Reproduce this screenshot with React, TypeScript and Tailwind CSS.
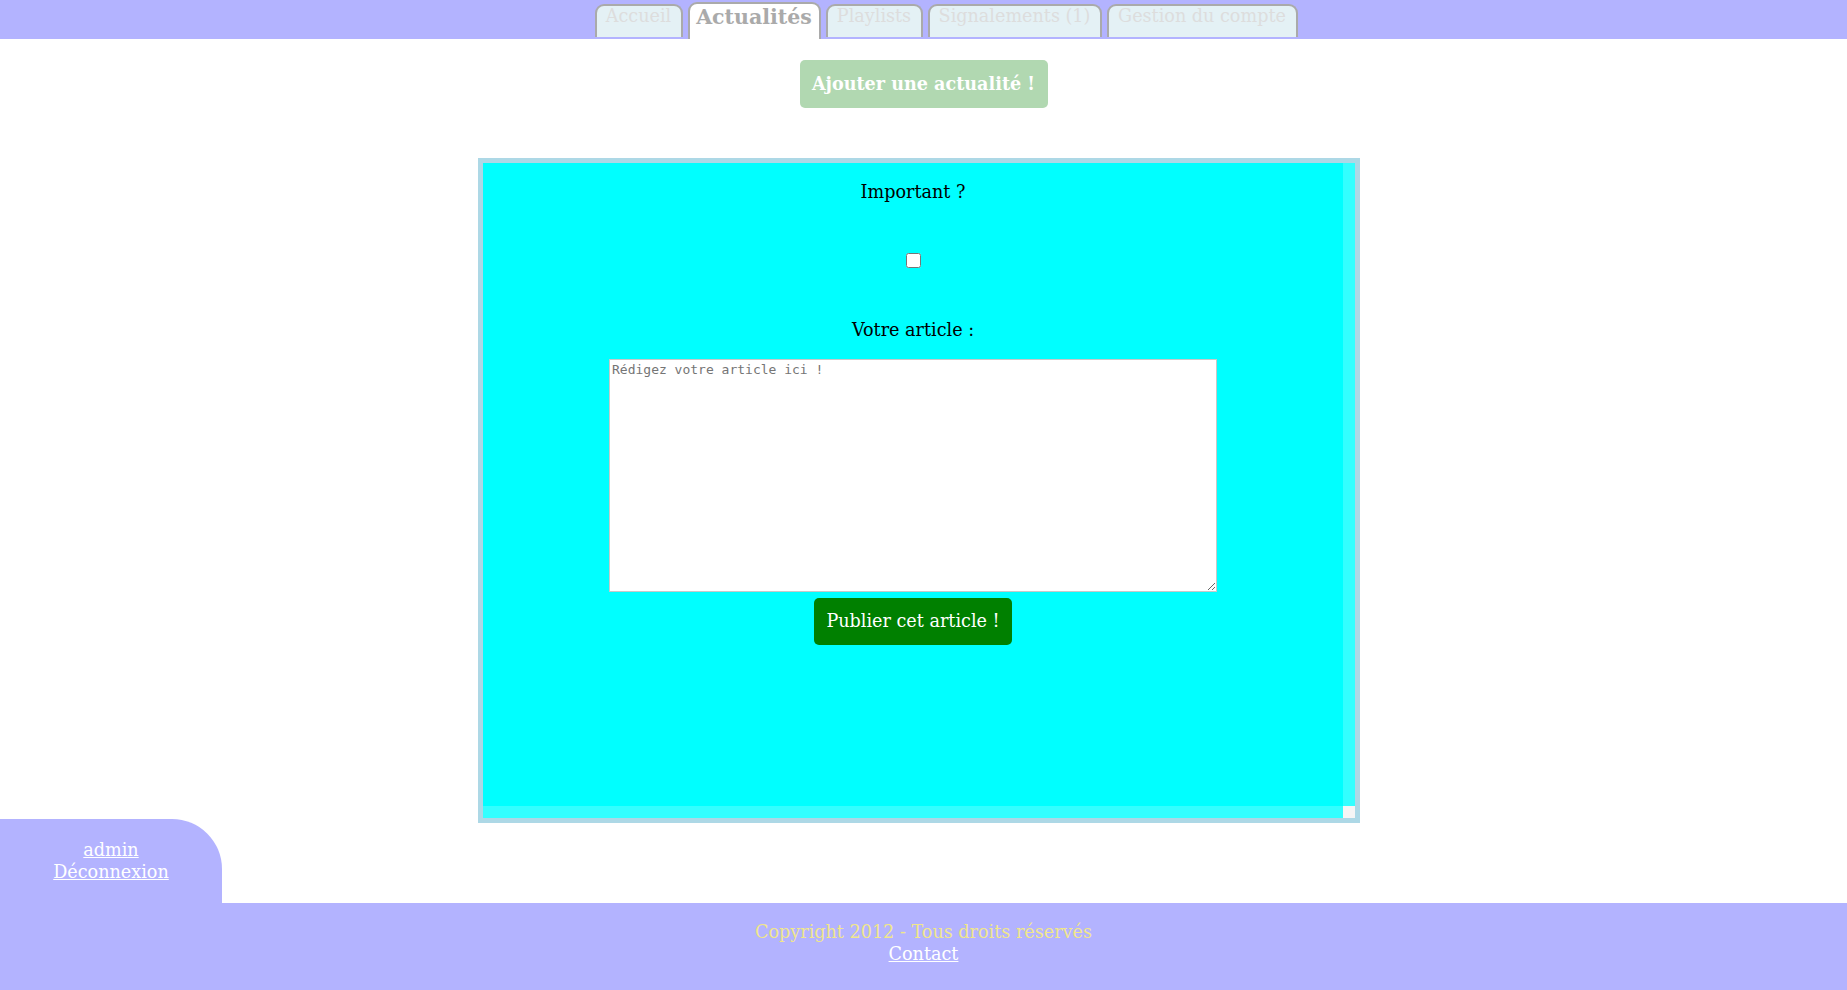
import React, { useState } from 'react'

const tabs = [
  { label: 'Accueil', w: 'w-[88px]' },
  { label: 'Actualités', w: 'w-[133px]', active: true },
  { label: 'Playlists', w: 'w-[97px]' },
  { label: 'Signalements (1)', w: 'w-[174px]' },
  { label: 'Gestion du compte', w: 'w-[191px]' }
]

export default function App() {
  const [important, setImportant] = useState(false)
  const [article, setArticle] = useState('')

  return (
    <div className="min-h-screen flex flex-col bg-white font-['DejaVu_Serif',serif] text-[17.6px]">
      <nav className="h-[39px] bg-[#b3b3ff] flex justify-center items-end gap-[5px] pl-[45px]">
        {tabs.map((t) =>
          t.active ? (
            <a
              key={t.label}
              href="#"
              className={`${t.w} h-[37px] self-end bg-white border-2 border-b-0 border-[#aaa] rounded-t-[9px] flex justify-center text-[20.5px] font-bold text-[#aaa] leading-[26px]`}
            >
              {t.label}
            </a>
          ) : (
            <a
              key={t.label}
              href="#"
              className={`${t.w} h-[33px] mb-[2px] bg-[#e4f1f5] border-2 border-b-0 border-[#aaa] rounded-t-[9px] flex justify-center text-[17.6px] text-[#ddd] leading-[20px]`}
            >
              {t.label}
            </a>
          )
        )}
      </nav>

      <div className="flex justify-center pt-[21px]">
        <button
          type="button"
          className="w-[248px] h-[48px] rounded-[5px] bg-[#008000] opacity-30 text-white font-bold text-[17.6px]"
        >
          Ajouter une actualité !
        </button>
      </div>

      <div className="flex justify-center pr-[9px] mt-[50px]">
        <div className="w-[882px] h-[665px] border-[5px] border-[#add8e6] bg-[#00ffff] grid grid-cols-[1fr_12px] grid-rows-[1fr_12px]">
          <form className="flex flex-col items-center pt-[19px]" onSubmit={(e) => e.preventDefault()}>
            <label htmlFor="important" className="leading-[21px] text-black">
              Important ?
            </label>
            <input
              id="important"
              type="checkbox"
              checked={important}
              onChange={() => setImportant(!important)}
              className="mt-[50px] w-[15px] h-[15px]"
            />
            <label htmlFor="article" className="mt-[52px] leading-[21px] text-black">
              Votre article :
            </label>
            <textarea
              id="article"
              value={article}
              onChange={(e) => setArticle(e.target.value)}
              placeholder="Rédigez votre article ici !"
              className="mt-[18px] w-[608px] h-[233px] bg-white border border-[#c8c8c8] p-[2px] font-['DejaVu_Sans_Mono',monospace] text-[13px] leading-[15px] placeholder:text-[#757575] text-black outline-none"
            />
            <button
              type="submit"
              className="mt-[6px] w-[198px] h-[47px] rounded-[5px] bg-[#008000] text-white text-[17.6px]"
            >
              Publier cet article !
            </button>
          </form>
          <div className="bg-[#33ffff]" />
          <div className="bg-[#33ffff]" />
          <div className="bg-[#f5f5f5]" />
        </div>
      </div>

      <div className="-mt-[4px] w-[222px] h-[84px] bg-[#b3b3ff] rounded-tr-[50px] flex flex-col items-center pt-[20px] leading-[22px]">
        <a href="#" className="text-white underline">admin</a>
        <a href="#" className="text-white underline">Déconnexion</a>
      </div>

      <footer className="flex-1 bg-[#b3b3ff] flex flex-col items-center pt-[18px] pb-[20px] leading-[22px]">
        <p className="text-[#f0e68c]">Copyright 2012 - Tous droits réservés</p>
        <a href="#" className="text-white underline">Contact</a>
      </footer>
    </div>
  )
}
